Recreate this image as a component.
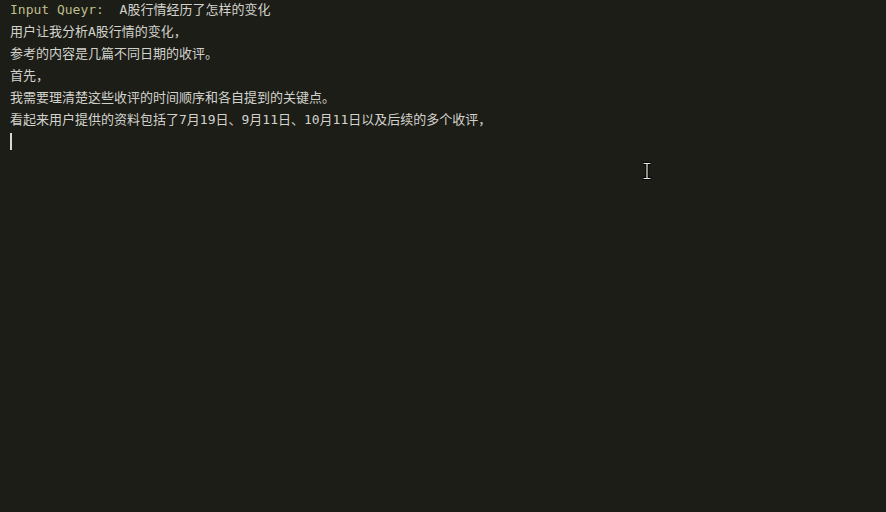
import React from 'react'

const lines = [
	'用户让我分析A股行情的变化，',
	'参考的内容是几篇不同日期的收评。',
	'首先，',
	'我需要理清楚这些收评的时间顺序和各自提到的关键点。',
	'看起来用户提供的资料包括了7月19日、9月11日、10月11日以及后续的多个收评，',
]

const App = () => {
	return (
		<div
			className="relative w-[886px] h-[512px] overflow-hidden bg-[#1d1d17] text-[#d2d2cc] text-[13px] leading-[22px]"
			style={{ fontFamily: '"DejaVu Sans Mono", "Noto Sans CJK SC", monospace' }}>
			<div className="pl-[10px] -mt-px">
				<div className="whitespace-pre">
					<span className="text-[#bdbf8c]">Input Queyr:  </span>
					<span>A股行情经历了怎样的变化</span>
				</div>
				{lines.map((line, i) => (
					<div key={i} className="whitespace-pre">
						{line}
					</div>
				))}
				<div className="h-[22px] pt-[2px]">
					<span className="block w-[2px] h-[17px] bg-[#d8d8d8]" />
				</div>
			</div>

			{/* mouse pointer */}
			<svg className="absolute left-[642px] top-[162px]" width="10" height="18" viewBox="0 0 10 18">
				<path d="M1 1.5h8M1 16.5h8M5 1.5v15" stroke="#000" strokeWidth="3" fill="none" />
				<path d="M1.5 1.5h7M1.5 16.5h7M5 1.5v15" stroke="#e8e8e8" strokeWidth="1.2" fill="none" />
			</svg>
		</div>
	)
}

export default App
